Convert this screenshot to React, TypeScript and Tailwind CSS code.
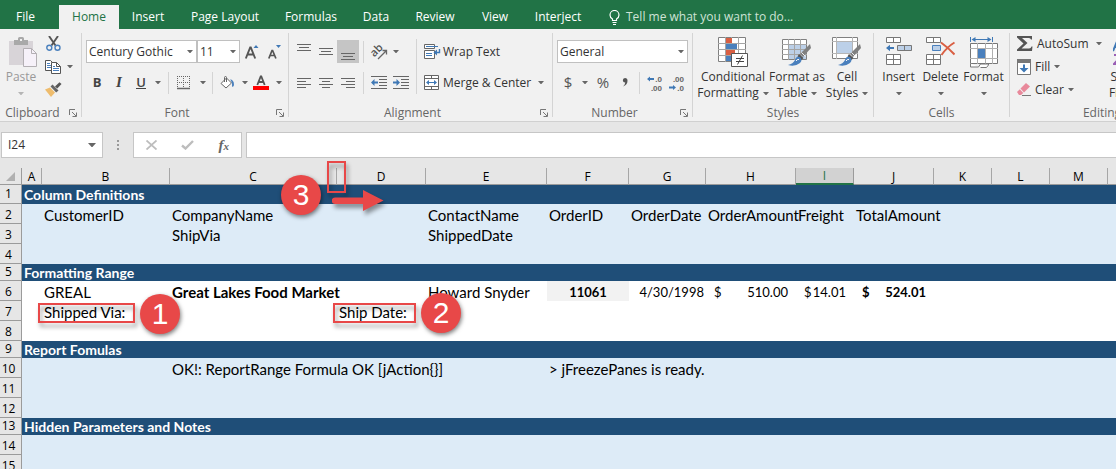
import React from "react";

function Caret({ className = "text-[#666]" }: { className?: string }) {
  return (
    <svg width="6" height="3" viewBox="0 0 6 3" className={`shrink-0 ${className}`} aria-hidden="true">
      <path d="M0 0h6L3 3.4z" fill="currentColor" />
    </svg>
  );
}

function Launcher({ label }: { label: string }) {
  return (
    <button aria-label={label} className="flex h-4 w-4 items-center justify-center">
      <svg width="8" height="8" viewBox="0 0 8 8" fill="none" stroke="#777" aria-hidden="true">
        <path d="M.5 6V.5H6" />
        <path d="M3 3l4 4M7.5 3.5v4h-4" />
      </svg>
    </button>
  );
}

function Group({
  label,
  width,
  launcher,
  children,
}: {
  label: string;
  width: string;
  launcher?: boolean;
  children: React.ReactNode;
}) {
  return (
    <section aria-label={label} className={`flex shrink-0 flex-col ${width}`}>
      <div className="flex h-[76px]">{children}</div>
      <div className="flex h-4 items-center">
        <span className="flex-1 text-center text-[#666]">{label}</span>
        {launcher && <Launcher label={`${label} settings`} />}
      </div>
    </section>
  );
}

function Divider() {
  return <div className="my-1 w-px shrink-0 bg-[#d4d4d4]" />;
}

function IconButton({
  label,
  className = "w-[22px]",
  children,
}: {
  label: string;
  className?: string;
  children: React.ReactNode;
}) {
  return (
    <button aria-label={label} className={`flex h-[23px] shrink-0 items-center justify-center ${className}`}>
      {children}
    </button>
  );
}

function DropButton({ label, className = "w-3" }: { label: string; className?: string }) {
  return (
    <IconButton label={label} className={className}>
      <Caret />
    </IconButton>
  );
}

function Rule() {
  return <div className="h-[22px] w-px shrink-0 bg-[#d4d4d4]" />;
}

function Picker({ label, value, width }: { label: string; value: string; width: string }) {
  return (
    <div className={`relative h-[23px] ${width}`}>
      <select
        aria-label={label}
        defaultValue={value}
        className="h-full w-full appearance-none border border-[#c0c0c0] bg-white pl-0.5 text-[#333] outline-none"
      >
        <option>{value}</option>
      </select>
      <span className="pointer-events-none absolute top-2.5 right-1">
        <Caret />
      </span>
    </div>
  );
}

function Lines({ spans }: { spans: [number, number, number][] }) {
  return (
    <svg width="14" height="22" viewBox="0 0 14 22" stroke="#666" aria-hidden="true">
      {spans.map(([y, a, b]) => (
        <path key={y} d={`M${a} ${y + 0.5}H${b}`} />
      ))}
    </svg>
  );
}

function PasteIcon() {
  return (
    <svg width="28" height="31" viewBox="0 0 28 31" aria-hidden="true">
      <path d="M0 4h24v24H0z" fill="#d8d4d8" />
      <path d="M5 3h4V1.500Q9 0 10.500 0h3Q15 0 15 1.500V3h4v5H5z" fill="#a9a9a9" />
      <path d="M11 2h2v2h-2z" fill="#f1f1f1" />
      <path d="M14.500 11.500h8l5 5v13h-13z" fill="#f6f1f9" stroke="#b3afb3" />
      <path d="M22.500 11.500v5h5" fill="none" stroke="#b3afb3" />
    </svg>
  );
}

function CutIcon() {
  return (
    <svg width="15" height="15" viewBox="0 0 15 15" fill="none" aria-hidden="true">
      <path d="M3 0l6.500 9.500M12 0L5.500 9.500" stroke="#555" strokeWidth="1.900" />
      <circle cx="3.300" cy="11.700" r="2.500" stroke="#4a80bd" strokeWidth="1.400" />
      <circle cx="11.500" cy="11.700" r="2.500" stroke="#4a80bd" strokeWidth="1.400" />
    </svg>
  );
}

function CopyIcon() {
  return (
    <svg width="16" height="14" viewBox="0 0 16 14" aria-hidden="true">
      <path d="M.5.5h5l3 3v7h-8z" fill="#fff" stroke="#555" />
      <path d="M2 3.500h3M2 5.500h4M2 7.500h4" stroke="#4a80bd" />
      <path d="M6.500 2.500h5l4 4v7h-9z" fill="#fff" stroke="#555" />
      <path d="M11.500 2.500v4h4" fill="none" stroke="#555" />
      <path d="M8 6.500h2M8 8.500h6M8 10.500h6" stroke="#4a80bd" />
    </svg>
  );
}

function PainterIcon() {
  return (
    <svg width="17" height="15" viewBox="0 0 17 15" aria-hidden="true">
      <path d="M0 7.500l5-2 5 5-4 4.500z" fill="#eebc6d" />
      <path d="M5.500 4.500l2-2 6 6-2.300 2z" fill="#666" />
      <path d="M10 4.500L14.500.3 16.500 2l-4.200 4.600z" fill="#555" />
    </svg>
  );
}

function BordersIcon() {
  return (
    <svg width="14" height="14" viewBox="0 0 14 14" stroke="#666" aria-hidden="true">
      <path d="M0 .5h13M0 6.500h13M.5 0v12M6.500 0v12M12.500 0v12" strokeDasharray="1 1" />
      <path d="M0 12.500h13" strokeWidth="1.500" />
    </svg>
  );
}

function BucketIcon() {
  return (
    <svg width="15" height="13" viewBox="0 0 15 13" aria-hidden="true">
      <path d="M1 7.500L6.500 2l5 5L6 12z" fill="#fff" stroke="#666" />
      <path d="M4.500 6V1.500Q4.500.5 5.500.5t1 1V6" fill="none" stroke="#666" />
      <path d="M10 3.500q4 0 4 5.500-.5 2.500-2 1.500Q12.500 6 10 3.500" fill="#4a80bd" />
    </svg>
  );
}

function SlantIcon() {
  return (
    <svg width="17" height="16" viewBox="0 0 17 16" className="overflow-visible" aria-hidden="true">
      <text
        x="1"
        y="12"
        transform="rotate(-45 4 10)"
        fontSize="11"
        fontWeight="600"
        fill="#555"
        fontFamily="Open Sans, sans-serif"
      >
        ab
      </text>
      <path d="M7 15L15 7M11.500 6.500H15.500V10.500" fill="none" stroke="#666" strokeWidth="1.300" />
    </svg>
  );
}

function IndentIcon({ outward }: { outward?: boolean }) {
  return (
    <svg width="16" height="13" viewBox="0 0 16 13" aria-hidden="true">
      <path d="M0 .5h16M8 3.500h8M8 6.500h8M8 9.500h8M0 12.500h16" stroke="#666" />
      {outward ? (
        <path d="M0 6.500L3.500 3v2.500H7v2H3.500V10z" fill="#3f78b5" />
      ) : (
        <path d="M7 6.500L3.500 3v2.500H0v2h3.500V10z" fill="#3f78b5" />
      )}
    </svg>
  );
}

function WrapIcon() {
  return (
    <svg width="17" height="16" viewBox="0 0 17 16" fill="none" aria-hidden="true">
      <path d="M.5.5h10v4H.5zM.5 6.500h10v8H.5z" fill="#fff" stroke="#666" />
      <path d="M2 2.500h12" stroke="#3f78b5" />
      <path d="M2 9.500h6M2 11.500h6" stroke="#3f78b5" />
      <path d="M15.500 5v3.500H11" stroke="#3f78b5" strokeWidth="1.400" />
      <path d="M9.500 8.500l3.500-3v6z" fill="#3f78b5" />
    </svg>
  );
}

function MergeIcon() {
  return (
    <svg width="15" height="15" viewBox="0 0 15 15" fill="none" aria-hidden="true">
      <path d="M.5.5h14v14H.5z" fill="#fff" stroke="#666" />
      <path d="M0 3.500h15M0 11.500h15M7.500 0v3M7.500 12v3" stroke="#666" />
      <path d="M3 7.500h9" stroke="#3f78b5" />
      <path d="M2 7.500L5 5v5zM13 7.500L10 5v5z" fill="#3f78b5" />
    </svg>
  );
}

function DecimalIcon({ more }: { more?: boolean }) {
  return (
    <svg width="15" height="18" viewBox="0 0 15 18" className="overflow-visible" aria-hidden="true">
      <g fontSize="8" fontWeight="700" fill="#666" fontFamily="Liberation Sans, sans-serif" textAnchor="end">
        <text x="15" y="8">{more ? ".0" : ".00"}</text>
        <text x="15" y="17">{more ? ".00" : ".0"}</text>
      </g>
      {more ? (
        <path d="M0 5l3-2.500V4h4v2H3v1.500z" fill="#3f78b5" />
      ) : (
        <path d="M7 13.500L4 11v1.500H0v2h4V16z" fill="#3f78b5" />
      )}
    </svg>
  );
}

function ConditionalIcon() {
  return (
    <svg width="30" height="30" viewBox="0 0 30 30" aria-hidden="true">
      <path d="M.5.5h27v24H.5z" fill="#fff" stroke="#808080" />
      <path d="M0 6.500h28M0 12.500h28M0 18.500h28M7.500 0v25M13.500 0v25M20.500 0v25" stroke="#a5a5a5" />
      <path d="M8 1h6v5H8zM8 13h9v5H8z" fill="#d95f43" />
      <path d="M8 7h11v5H8zM8 19h5v5H8z" fill="#4a80bd" />
      <path d="M13.500 16.500h16v13h-16z" fill="#fff" stroke="#555" />
      <path d="M18 21.500h8M18 24.500h8M24.500 18.500l-5 9" stroke="#444" fill="none" />
    </svg>
  );
}

function Brush() {
  return (
    <g>
      <path d="M28 7l1 4-8 9-3-3z" fill="#808080" />
      <path d="M19.500 15.500l4 4" stroke="#f1f1f1" />
      <path d="M17 17l4.500 4-2 2-4-3.500z" fill="#555" />
      <path d="M6 28q5-1 7-5 1-4 5-3 3 3 0 6-5 4-12 2" fill="#4a80bd" />
      <path d="M14 24q1-2 3-1.500" stroke="#fff" fill="none" />
    </g>
  );
}

function FormatTableIcon() {
  return (
    <svg width="30" height="30" viewBox="0 0 30 30" aria-hidden="true">
      <path d="M.5 2.500h24v20H.5z" fill="#fff" stroke="#808080" />
      <path d="M7 8h17v14H7z" fill="#bcd0e8" />
      <path d="M0 7.500h25M0 12.500h25M0 17.500h25M6.500 2v21M12.500 2v21M18.500 2v21" stroke="#a5a5a5" />
      <Brush />
    </svg>
  );
}

function CellStylesIcon() {
  return (
    <svg width="30" height="30" viewBox="0 0 30 30" aria-hidden="true">
      <path d="M.5.5h25v21H.5z" fill="#fff" stroke="#808080" />
      <path d="M0 4.500h26M0 16.500h26M4.500 0v22M20.500 0v22" stroke="#b5b5b5" />
      <path d="M5 5h15v11H5z" fill="#bcd0e8" />
      <Brush />
    </svg>
  );
}

function InsertIcon() {
  return (
    <svg width="26" height="30" viewBox="0 0 26 30" aria-hidden="true">
      <path d="M.5.500h14v5H.5zM.5 17.500h14v10H.5z" fill="#fff" stroke="#777" />
      <path d="M7.500.5v5M7.500 17.500v10M.5 22.500h14" stroke="#777" />
      <path d="M11.500 8.500h14v5h-14z" fill="#bcd0e8" stroke="#777" />
      <path d="M18.500 8.500v5" stroke="#777" />
      <path d="M0 11l4-3.200V10h4v2H4v2.200z" fill="#3f78b5" />
    </svg>
  );
}

function DeleteIcon() {
  return (
    <svg width="29" height="30" viewBox="0 0 29 30" aria-hidden="true">
      <path d="M.5.500h14v5H.5zM.5 17.500h14v10H.5z" fill="#fff" stroke="#777" />
      <path d="M7.500.5v5M7.500 17.500v10M.5 22.500h14" stroke="#777" />
      <path d="M6.500 8.500h8v5h-8z" fill="#bcd0e8" stroke="#4a80bd" />
      <path d="M15 5.500q7 5 13.500 12M28.500 5.500Q21 10 15.500 18" stroke="#d95f43" strokeWidth="2" fill="none" />
    </svg>
  );
}

function FormatIcon() {
  return (
    <svg width="28" height="32" viewBox="0 0 28 32" aria-hidden="true">
      <path d="M.5 0v5M22.500 0v5M3 2.500h17" stroke="#3f78b5" />
      <path d="M1.500 2.500l4-2.500v5zM21.500 2.500l-4-2.500v5z" fill="#3f78b5" />
      <path d="M.5 6.500h27v20H.5z" fill="#fff" stroke="#777" />
      <path d="M0 11.500h28M0 21.500h28M7.500 6v21M15.500 6v21M22.500 6v21" stroke="#b0b0b0" />
      <path d="M8 12h7v9H8z" fill="#4a80bd" />
      <path d="M.5 26.500v3.500h8l2-3h8v1l-2 2.500h-6" fill="#fff" stroke="#777" />
    </svg>
  );
}

function SigmaIcon() {
  return (
    <svg width="16" height="15" viewBox="0 0 16 15" aria-hidden="true">
      <path d="M0 0h15v3.500h-1Q13.500 2 12 2H5l5.500 5L4.500 12.500H12q2 0 2.500-2H15.500L15 15H0v-1.500L6.500 7.500 0 1.500z" fill="#555" />
    </svg>
  );
}

function FillIcon() {
  return (
    <svg width="14" height="16" viewBox="0 0 14 16" aria-hidden="true">
      <path d="M.5.5h13v15H.5z" fill="#fff" stroke="#777" />
      <path d="M0 0h14v4H0z" fill="#777" />
      <path d="M7 13.500L2.500 9H6V5.500h2V9h3.500z" fill="#3f78b5" />
    </svg>
  );
}

function EraserIcon() {
  return (
    <svg width="14" height="13" viewBox="0 0 14 13" aria-hidden="true">
      <path d="M3.500 5.500L9 0l4 3.500-6 6z" fill="#e8899b" />
      <path d="M2.800 6.300l3.500 3.700L4 12H2L0 9z" fill="#e8899b" />
      <path d="M5 12.500h9" stroke="#777" />
    </svg>
  );
}

function TallButton({
  width,
  icon,
  lines,
}: {
  width: string;
  icon: React.ReactNode;
  lines: [string, string?];
}) {
  return (
    <button className={`flex shrink-0 flex-col items-center pt-2 whitespace-nowrap text-[#333] ${width}`}>
      <span className="flex h-8 items-start">{icon}</span>
      <span className="h-4 leading-4">{lines[0]}</span>
      <span className="flex h-4 items-center gap-1 leading-4">
        {lines[1]}
        <Caret />
      </span>
    </button>
  );
}

function Ribbon() {
  return (
    <div className="flex overflow-hidden border-b border-[#d0d0d0] bg-[#f1f1f1] whitespace-nowrap">
      <Group label="Clipboard" width="w-[81px]" launcher>
        <button className="ml-1.5 flex w-[30px] flex-col items-center pt-2 text-[#999]">
          <span className="flex h-8 items-start pl-1">
            <PasteIcon />
          </span>
          <span className="h-4 leading-4">Paste</span>
          <span className="flex h-4 items-center">
            <Caret className="text-[#b5b5b5]" />
          </span>
        </button>
        <div className="ml-1.5 flex flex-col pt-[3px]">
          <IconButton label="Cut">
            <CutIcon />
          </IconButton>
          <div className="flex">
            <IconButton label="Copy">
              <CopyIcon />
            </IconButton>
            <DropButton label="Copy options" />
          </div>
          <IconButton label="Format painter">
            <PainterIcon />
          </IconButton>
        </div>
      </Group>
      <Divider />

      <Group label="Font" width="w-[206px]" launcher>
        <div className="flex flex-col gap-2 pt-[11px] pl-1">
          <div className="flex">
            <Picker label="Font name" value="Century Gothic" width="w-[111px]" />
            <Picker label="Font size" value="11" width="w-[43px]" />
            <IconButton label="Grow font" className="w-6">
              <svg width="14" height="16" viewBox="0 0 14 16" aria-hidden="true">
                <path d="M.8 14.500L5.200 3.500h.6l4.400 11M2.500 10.500h6" fill="none" stroke="#555" strokeWidth="1.900" />
                <path d="M8.500 4L11 1l2.500 3z" fill="#3f78b5" />
              </svg>
            </IconButton>
            <IconButton label="Shrink font" className="w-5">
              <svg width="13" height="16" viewBox="0 0 13 16" aria-hidden="true">
                <path d="M.8 14.500L4 6.500h.6l3.300 8M2 11.500h5" fill="none" stroke="#555" strokeWidth="1.700" />
                <path d="M8 1h5l-2.500 3z" fill="#3f78b5" />
              </svg>
            </IconButton>
          </div>
          <div className="flex items-center text-[#444]">
            <IconButton label="Bold">
              <b className="text-[13px]">B</b>
            </IconButton>
            <IconButton label="Italic">
              <i className="font-['Liberation_Serif',serif] text-[15px] font-bold">I</i>
            </IconButton>
            <IconButton label="Underline">
              <span className="border-b border-[#444] text-[13px] leading-3 font-semibold">U</span>
            </IconButton>
            <DropButton label="Underline options" />
            <div className="ml-1">
              <Rule />
            </div>
            <IconButton label="Borders" className="w-[29px]">
              <BordersIcon />
            </IconButton>
            <DropButton label="Border options" className="w-2.5" />
            <div className="ml-1">
              <Rule />
            </div>
            <IconButton label="Fill color" className="w-7">
              <BucketIcon />
            </IconButton>
            <DropButton label="Fill color options" className="w-2" />
            <IconButton label="Font color" className="w-6">
              <svg width="16" height="17" viewBox="0 0 16 17" aria-hidden="true">
                <path d="M4.300 11L7.700 2.500h.6L11.700 11M5.500 8h5" fill="none" stroke="#555" strokeWidth="1.800" />
                <path d="M0 12h16v4H0z" fill="#f00" />
              </svg>
            </IconButton>
            <DropButton label="Font color options" />
          </div>
        </div>
      </Group>
      <Divider />

      <Group label="Alignment" width="w-[263px]" launcher>
        <div className="flex flex-col gap-2 pt-[11px] pl-1">
          <div className="flex items-center">
            <IconButton label="Top align">
              <Lines spans={[[3, 0, 14], [6, 2, 12], [9, 0, 14]]} />
            </IconButton>
            <IconButton label="Middle align">
              <Lines spans={[[7, 0, 14], [10, 2, 12], [13, 0, 14]]} />
            </IconButton>
            <IconButton label="Bottom align" className="w-[22px] bg-[#c5c5c5]">
              <Lines spans={[[12, 0, 14], [15, 2, 12], [18, 0, 14]]} />
            </IconButton>
            <div className="mx-1">
              <Rule />
            </div>
            <IconButton label="Orientation">
              <SlantIcon />
            </IconButton>
            <DropButton label="Orientation options" />
          </div>
          <div className="flex items-center">
            <IconButton label="Align left">
              <Lines spans={[[6, 0, 14], [9, 0, 9], [12, 0, 14], [15, 0, 9]]} />
            </IconButton>
            <IconButton label="Center">
              <Lines spans={[[6, 0, 14], [9, 3, 11], [12, 0, 14], [15, 3, 11]]} />
            </IconButton>
            <IconButton label="Align right">
              <Lines spans={[[6, 0, 14], [9, 5, 14], [12, 0, 14], [15, 5, 14]]} />
            </IconButton>
            <div className="mx-1">
              <Rule />
            </div>
            <IconButton label="Decrease indent">
              <IndentIcon outward />
            </IconButton>
            <IconButton label="Increase indent">
              <IndentIcon />
            </IconButton>
          </div>
        </div>
        <div className="mt-2.5 ml-1 h-[55px] w-px bg-[#d4d4d4]" />
        <div className="flex flex-col gap-2 pt-[11px] pl-[7px] text-[#333]">
          <button className="flex h-[23px] items-center gap-0.5">
            <WrapIcon />
            Wrap Text
          </button>
          <div className="flex items-center">
            <button className="flex h-[23px] items-center gap-1">
              <MergeIcon />
              Merge &amp; Center
            </button>
            <DropButton label="Merge options" className="w-5" />
          </div>
        </div>
      </Group>
      <Divider />

      <Group label="Number" width="w-[139px]" launcher>
        <div className="flex flex-col gap-2 pt-[11px] pl-1">
          <Picker label="Number format" value="General" width="w-[131px]" />
          <div className="flex items-center text-[#555]">
            <IconButton label="Accounting format">
              <span className="text-[15px]">$</span>
            </IconButton>
            <DropButton label="Accounting format options" />
            <IconButton label="Percent" className="w-6">
              <span className="text-[15px]">%</span>
            </IconButton>
            <IconButton label="Comma" className="w-5">
              <svg width="6" height="9" viewBox="0 0 6 9" aria-hidden="true">
                <path d="M3 0a2.300 2.300 0 1 0 .3 4.600Q3 7 1 8.500 5.500 7 5.500 2.800 5.500 0 3 0" fill="#555" />
              </svg>
            </IconButton>
            <div className="ml-1">
              <Rule />
            </div>
            <IconButton label="Increase decimal" className="w-7">
              <DecimalIcon more />
            </IconButton>
            <IconButton label="Decrease decimal" className="w-4">
              <DecimalIcon />
            </IconButton>
          </div>
        </div>
      </Group>
      <Divider />

      <Group label="Styles" width="w-[180px]">
        <div className="flex pl-1">
          <TallButton width="w-[72px]" icon={<ConditionalIcon />} lines={["Conditional", "Formatting"]} />
          <TallButton width="w-14" icon={<FormatTableIcon />} lines={["Format as", "Table"]} />
          <TallButton width="w-11" icon={<CellStylesIcon />} lines={["Cell", "Styles"]} />
        </div>
      </Group>
      <Divider />

      <Group label="Cells" width="w-[135px]">
        <div className="flex pl-1">
          <TallButton width="w-[41px]" icon={<InsertIcon />} lines={["Insert"]} />
          <TallButton width="w-[43px]" icon={<DeleteIcon />} lines={["Delete"]} />
          <TallButton width="w-[43px]" icon={<FormatIcon />} lines={["Format"]} />
        </div>
      </Group>
      <Divider />

      <Group label="Editing" width="w-[184px]">
        <div className="flex w-[100px] flex-col pt-[3px] pl-[7px] text-[#333]">
          <div className="flex">
            <button className="flex h-[23px] items-center gap-1">
              <SigmaIcon />
              AutoSum
            </button>
            <DropButton label="AutoSum options" className="w-5" />
          </div>
          <button className="flex h-[23px] items-center gap-1">
            <FillIcon />
            Fill
            <Caret />
          </button>
          <button className="flex h-[23px] items-center gap-1">
            <EraserIcon />
            Clear
            <Caret />
          </button>
        </div>
        <TallButton
          width="w-9"
          icon={
            <svg width="30" height="30" viewBox="0 0 30 30" fill="none" aria-hidden="true">
              <path d="M0 14L5 2l5 12M2 10h6" stroke="#3f78b5" strokeWidth="2" />
              <path d="M1 18h8L1 27h8" stroke="#9a5fb5" strokeWidth="2" />
              <path d="M13 6h15l-6 8v10l-3-3v-7z" fill="#777" />
            </svg>
          }
          lines={["Sort &", "Filter"]}
        />
      </Group>
    </div>
  );
}

const tabs: [string, string][] = [
  ["File", "w-[59px] pr-2"],
  ["Home", "w-[60px] bg-[#f1f1f1] text-[#217346]"],
  ["Insert", "w-[58px]"],
  ["Page Layout", "w-24"],
  ["Formulas", "w-[76px]"],
  ["Data", "w-[54px]"],
  ["Review", "w-16"],
  ["View", "w-14"],
  ["Interject", "w-[70px]"],
];

function TabBar() {
  return (
    <nav aria-label="Ribbon tabs" className="flex bg-[#217346] pt-[5px] text-white">
      {tabs.map(([name, style]) => (
        <button key={name} className={`h-6 shrink-0 text-center whitespace-nowrap ${style}`}>
          {name}
        </button>
      ))}
      <button className="ml-4 flex h-6 items-center gap-1.5 whitespace-nowrap text-[#cfe3d7]">
        <svg width="11" height="15" viewBox="0 0 11 15" fill="none" stroke="#fff" aria-hidden="true">
          <path d="M3.500 10.500V9Q1 7.500 1 5a4.500 4.500 0 0 1 9 0Q10 7.500 7.500 9v1.500zM3.500 12.500h4M4 14.500h3" strokeWidth="1.200" />
        </svg>
        Tell me what you want to do...
      </button>
    </nav>
  );
}

function FormulaBar() {
  return (
    <div className="flex items-center gap-1 pt-2.5 pl-px">
      <div className="flex h-[26px] w-[102px] items-center border border-[#c6c6c6] bg-white">
        <input
          aria-label="Name box"
          defaultValue="I24"
          className="w-0 flex-1 bg-transparent pl-1.5 text-[#333] outline-none"
        />
        <button aria-label="Name list" className="px-1.5">
          <svg width="8" height="4" viewBox="0 0 8 4" aria-hidden="true">
            <path d="M0 0h8L4 4.500z" fill="#666" />
          </svg>
        </button>
      </div>
      <div className="flex w-[22px] justify-center">
        <svg width="2" height="10" viewBox="0 0 2 10" fill="#999" aria-hidden="true">
          <path d="M0 0h2v2H0zM0 4h2v2H0zM0 8h2v2H0z" />
        </svg>
      </div>
      <div className="flex h-[26px] w-[109px] items-center justify-around border border-[#c6c6c6] bg-white">
        <button aria-label="Cancel">
          <svg width="11" height="10" viewBox="0 0 11 10" stroke="#bdbdbd" strokeWidth="1.800" aria-hidden="true">
            <path d="M.5.5l10 9M10.500.5l-10 9" />
          </svg>
        </button>
        <button aria-label="Enter">
          <svg width="13" height="10" viewBox="0 0 13 10" fill="none" stroke="#bdbdbd" strokeWidth="2.400" aria-hidden="true">
            <path d="M1 5.500l3.500 3L12 1" />
          </svg>
        </button>
        <button
          aria-label="Insert function"
          className="font-['Liberation_Serif',serif] text-[15px] leading-4 font-bold text-[#666] italic"
        >
          f<span className="text-[11px]">x</span>
        </button>
      </div>
      <input
        aria-label="Formula"
        className="h-[26px] min-w-0 flex-1 border border-r-0 border-[#c6c6c6] bg-white px-2 outline-none"
      />
    </div>
  );
}

const columns: [string, string][] = [
  ["A", "w-5"],
  ["B", "w-32"],
  ["C", "w-[167px]"],
  ["D", "w-[89px]"],
  ["E", "w-[121px]"],
  ["F", "w-[82px]"],
  ["G", "w-[77px]"],
  ["H", "w-[90px]"],
  ["I", "w-[58px]"],
  ["J", "w-20"],
  ["K", "w-[58px]"],
  ["L", "w-[58px]"],
  ["M", "w-[58px]"],
  ["", ""],
];

type Row = { title?: string; plain?: boolean; cells?: Record<string, React.ReactNode> };

function Money({ amount }: { amount: string }) {
  return (
    <span className="flex justify-between px-1.5 text-[13px]">
      <span>$</span>
      <span>{amount}</span>
    </span>
  );
}

const rows: Row[] = [
  { title: "Column Definitions" },
  {
    cells: {
      B: "CustomerID",
      C: "CompanyName",
      E: "ContactName",
      F: "OrderID",
      G: "OrderDate",
      H: "OrderAmount",
      I: "Freight",
      J: "TotalAmount",
    },
  },
  { cells: { C: "ShipVia", E: "ShippedDate" } },
  {},
  { title: "Formatting Range" },
  {
    plain: true,
    cells: {
      B: "GREAL",
      C: <b>Great Lakes Food Market</b>,
      E: "Howard Snyder",
      F: <b className="block text-center text-[13px]">11061</b>,
      G: <span className="block text-right text-[13px]">4/30/1998</span>,
      H: <Money amount="510.00" />,
      I: <Money amount="14.01" />,
      J: (
        <b>
          <Money amount="524.01" />
        </b>
      ),
    },
  },
  { plain: true, cells: { B: "Shipped Via:", D: "Ship Date:" } },
  { plain: true },
  { title: "Report Fomulas" },
  { cells: { C: "OK!: ReportRange Formula OK [jAction{}]", F: "> jFreezePanes is ready." } },
  {},
  {},
  { title: "Hidden Parameters and Notes" },
  {},
  {},
];

function Sheet() {
  return (
    <table className="w-full min-w-[1108px] table-fixed border-separate border-spacing-0 font-['Century_Gothic',Lato,sans-serif] text-[15px] leading-4 whitespace-nowrap text-black">
      <colgroup>
        <col className="w-[22px]" />
        {columns.map(([name, width]) => (
          <col key={name} className={width} />
        ))}
      </colgroup>
      <thead className="font-['Open_Sans',sans-serif] text-[12px]">
        <tr className="h-[17px]">
          <th aria-label="Select all" className="border-r border-b border-[#9b9b9b] p-0">
            <svg width="9" height="9" viewBox="0 0 9 9" className="mx-auto" aria-hidden="true">
              <path d="M9 0v9H0z" fill="#b0b0b0" />
            </svg>
          </th>
          {columns.map(([name]) => (
            <th
              key={name}
              scope="col"
              className={`p-0 leading-[15px] font-normal ${
                name === "I"
                  ? "border-r border-b-2 border-r-[#9b9b9b] border-b-[#217346] bg-[#d2d2d2] text-[#217346]"
                  : name
                    ? "border-r border-b border-r-[#a6a6a6] border-b-[#9b9b9b]"
                    : "border-b border-b-[#9b9b9b]"
              }`}
            >
              {name}
            </th>
          ))}
        </tr>
      </thead>
      <tbody>
        {rows.map((row, i) => (
          <tr
            key={i}
            className={
              row.title
                ? `bg-[#1f4e78] text-white ${i === 0 ? "h-[19px]" : "h-[17px]"}`
                : `h-5 ${row.plain ? "bg-white" : "bg-[#ddebf7]"}`
            }
          >
            <th
              scope="row"
              className={`border-r border-b border-[#9b9b9b] bg-[#e6e6e6] pr-1 pb-0 pl-0 text-center font-['Open_Sans',sans-serif] text-[12px] font-normal text-black ${
                row.title ? "pt-0" : "pt-0.5"
              }`}
            >
              {i + 1}
            </th>
            {row.title ? (
              <td colSpan={columns.length} className="p-0 pl-0.5 text-[14px] font-bold">
                {row.title}
              </td>
            ) : (
              columns.map(([name]) => (
                <td
                  key={name}
                  className={`px-0.5 pt-0.5 pb-0 ${i === 5 && name === "F" ? "bg-[#f2f2f2]" : ""}`}
                >
                  {row.cells?.[name]}
                </td>
              ))
            )}
          </tr>
        ))}
      </tbody>
    </table>
  );
}

function Marker({ n, place }: { n: number; place: string }) {
  return (
    <div
      className={`absolute flex h-10 w-10 items-center justify-center rounded-full bg-[#e84848] font-['Liberation_Sans',sans-serif] text-[30px] leading-none text-white shadow-[1px_2px_4px_rgba(0,0,0,0.5)] ${place}`}
    >
      {n}
    </div>
  );
}

function Outline({ place }: { place: string }) {
  return (
    <div className={`absolute border-2 border-[#e84848] drop-shadow-[2px_4px_2px_rgba(0,0,0,0.4)] ${place}`} />
  );
}

export default function App() {
  return (
    <div className="flex h-screen flex-col overflow-hidden bg-[#e6e6e6] font-['Open_Sans',sans-serif] text-[12px]">
      <TabBar />
      <Ribbon />
      <FormulaBar />
      <main className="relative min-h-0 flex-1 overflow-hidden pt-2.5">
        <Sheet />
        <Outline place="top-[145px] left-[38px] h-5 w-[97px]" />
        <Outline place="top-[145px] left-[333px] h-5 w-[83px]" />
        <Outline place="top-[3px] left-[327px] h-8 w-[19px]" />
        <Marker n={1} place="top-[136px] left-[140px]" />
        <Marker n={2} place="top-[135px] left-[421px]" />
        <Marker n={3} place="top-[17px] left-[281px]" />
        <svg
          width="52"
          height="22"
          viewBox="0 0 52 22"
          className="absolute top-8 left-[332px] drop-shadow-[2px_4px_2px_rgba(0,0,0,0.4)]"
          aria-hidden="true"
        >
          <path d="M3 7.500h28V0l20.500 10.500L31 21v-7H3a3 3 0 0 1 0-6.500" fill="#e84848" />
        </svg>
      </main>
    </div>
  );
}
